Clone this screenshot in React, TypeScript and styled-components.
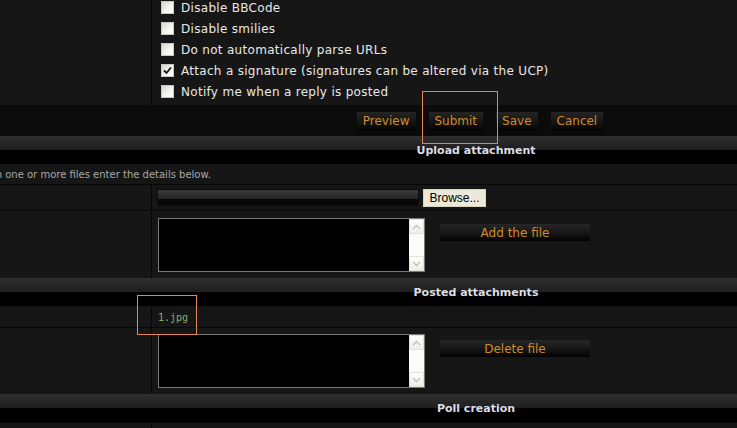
import React from "react";
import styled, { createGlobalStyle } from "styled-components";

const GlobalStyle = createGlobalStyle`
  html, body {
    margin: 0;
    padding: 0;
    background: #000;
    overflow: hidden;
  }
  body {
    font-family: "DejaVu Sans", Verdana, sans-serif;
  }
`;

const orange = "#cf8a2b";

const Viewport = styled.div`
  position: relative;
  width: 737px;
  height: 428px;
  overflow: hidden;
  background: #000;
`;

// the form table is wider than the window, it is centred at x=476
const Table = styled.div`
  width: 1312px;
  margin-left: -180px;
`;

const Split = styled.div<{ $h: number; $top?: boolean }>`
  display: grid;
  grid-template-columns: 332px 1fr;
  height: ${(p) => p.$h}px;
  box-sizing: border-box;
  background: #161616;
  border-top: ${(p) => (p.$top ? "1px solid #070707" : "none")};
  overflow: hidden;
`;

const LeftCell = styled.div`
  box-sizing: border-box;
  border-right: 1px solid #070707;
`;

const OptionList = styled.div`
  margin-top: -3px;
  padding-left: 9px;
`;

const OptionRow = styled.label`
  display: flex;
  align-items: center;
  gap: 7px;
  height: 21px;
  color: #e8e8e8;
  font-size: 12px;
  letter-spacing: 0.3px;
  white-space: nowrap;
`;

const Box = styled.span`
  display: inline-flex;
  align-items: center;
  justify-content: center;
  width: 13px;
  height: 13px;
  box-sizing: border-box;
  border: 1px solid #c8c8c0;
  background: linear-gradient(135deg, #d6d6ce 0%, #f4f4f0 55%, #ffffff 100%);
`;

const ButtonBar = styled.div`
  display: flex;
  justify-content: center;
  align-items: center;
  gap: 13px;
  height: 31px;
  padding: 2px 0 0 8px;
  box-sizing: border-box;
  background: #0b0b0b;
`;

const ActionButton = styled.button`
  height: 19px;
  padding: 0 6px;
  border: none;
  background: linear-gradient(to bottom, #242424 0%, #161616 50%, #030303 100%);
  color: ${orange};
  font-family: "DejaVu Sans", Verdana, sans-serif;
  font-size: 12px;
  line-height: 19px;
`;

const SectionHeader = styled.div`
  display: flex;
  align-items: center;
  justify-content: center;
  height: 28px;
  padding-top: 1px;
  box-sizing: border-box;
  background: linear-gradient(
    to bottom,
    #2f2f2f 0%,
    #1e1e1e 50%,
    #010101 50%,
    #000 100%
  );
  color: #dcdce4;
  font-size: 11px;
  font-weight: bold;
`;

const HelpRow = styled.div`
  height: 20px;
  line-height: 21px;
  padding-left: 80px;
  background: #161616;
  color: #a8a8a8;
  font-size: 10px;
  white-space: nowrap;
`;

const FileCell = styled.div`
  display: flex;
  align-items: center;
  gap: 4px;
  padding-left: 5px;
`;

const FileField = styled.div`
  width: 262px;
  height: 17px;
  box-sizing: border-box;
  border: 1px solid #0c0c0c;
  background: linear-gradient(to bottom, #3a3a3a 0%, #252525 60%, #080808 62%, #080808 100%);
`;

const BrowseButton = styled.button`
  width: 63px;
  height: 18px;
  padding: 0;
  border: 1px solid #d8d4c2;
  background: #ece9d8;
  color: #000;
  font-family: "Liberation Sans", Arial, sans-serif;
  font-size: 12px;
`;

const CommentCell = styled.div<{ $pt: number }>`
  display: flex;
  align-items: flex-start;
  gap: 15px;
  padding: ${(p) => p.$pt}px 0 0 6px;
`;

const TextBox = styled.div`
  display: flex;
  width: 267px;
  height: 54px;
  box-sizing: border-box;
  border: 1px solid #7a7a7a;
  background: #000;
`;

const Area = styled.textarea`
  flex: 1;
  border: none;
  resize: none;
  background: #000;
  outline: none;
`;

const Scroll = styled.div`
  display: flex;
  flex-direction: column;
  justify-content: space-between;
  width: 15px;
  background: #fbfbf7;
`;

const ScrollArrow = styled.div`
  display: flex;
  align-items: center;
  justify-content: center;
  height: 15px;
  box-sizing: border-box;
  border: 1px solid #e2e2d8;
  background: linear-gradient(to bottom, #fdfdfb, #efefe8);
`;

const WideButton = styled.button`
  width: 150px;
  height: 17px;
  margin-top: 6px;
  padding: 0;
  border: none;
  background: linear-gradient(to bottom, #262626 0%, #171717 50%, #020202 100%);
  color: ${orange};
  font-family: "DejaVu Sans", Verdana, sans-serif;
  font-size: 12px;
  line-height: 18px;
`;

const FileName = styled.div`
  display: flex;
  align-items: center;
  padding: 1px 0 0 6px;
  color: #8dab6e;
  font-family: "DejaVu Sans Mono", monospace;
  font-size: 10px;
`;

const Highlight = styled.div<{ $x: number; $y: number; $w: number; $h: number }>`
  position: absolute;
  left: ${(p) => p.$x}px;
  top: ${(p) => p.$y}px;
  width: ${(p) => p.$w}px;
  height: ${(p) => p.$h}px;
  box-sizing: border-box;
  border: 1px solid #e6855a;
  pointer-events: none;
`;

const Check = () => (
  <svg width="9" height="9" viewBox="0 0 9 9">
    <path d="M1 4.5 L3.5 7 L8 1.5" fill="none" stroke="#111" strokeWidth="1.8" />
  </svg>
);

const Chevron = ({ up }: { up?: boolean }) => (
  <svg width="9" height="6" viewBox="0 0 9 6">
    <path
      d={up ? "M1 5 L4.5 1.5 L8 5" : "M1 1 L4.5 4.5 L8 1"}
      fill="none"
      stroke="#c2c2b8"
      strokeWidth="1.4"
    />
  </svg>
);

const options = [
  { label: "Disable BBCode", checked: false },
  { label: "Disable smilies", checked: false },
  { label: "Do not automatically parse URLs", checked: false },
  { label: "Attach a signature (signatures can be altered via the UCP)", checked: true },
  { label: "Notify me when a reply is posted", checked: false },
];

const CommentBox = () => (
  <TextBox>
    <Area />
    <Scroll>
      <ScrollArrow>
        <Chevron up />
      </ScrollArrow>
      <ScrollArrow>
        <Chevron />
      </ScrollArrow>
    </Scroll>
  </TextBox>
);

export default function App() {
  return (
    <Viewport>
      <GlobalStyle />
      <Table>
        <Split $h={105}>
          <LeftCell />
          <OptionList>
            {options.map((o) => (
              <OptionRow key={o.label}>
                <Box>{o.checked && <Check />}</Box>
                {o.label}
              </OptionRow>
            ))}
          </OptionList>
        </Split>

        <ButtonBar>
          <ActionButton>Preview</ActionButton>
          <ActionButton>Submit</ActionButton>
          <ActionButton>Save</ActionButton>
          <ActionButton>Cancel</ActionButton>
        </ButtonBar>

        <SectionHeader>Upload attachment</SectionHeader>
        <HelpRow>If you wish to attach one or more files enter the details below.</HelpRow>

        <Split $h={26} $top>
          <LeftCell />
          <FileCell>
            <FileField />
            <BrowseButton>Browse...</BrowseButton>
          </FileCell>
        </Split>

        <Split $h={68} $top>
          <LeftCell />
          <CommentCell $pt={7}>
            <CommentBox />
            <WideButton>Add the file</WideButton>
          </CommentCell>
        </Split>

        <SectionHeader>Posted attachments</SectionHeader>

        <Split $h={21}>
          <LeftCell />
          <FileName>1.jpg</FileName>
        </Split>

        <Split $h={67} $top>
          <LeftCell />
          <CommentCell $pt={6}>
            <CommentBox />
            <WideButton>Delete file</WideButton>
          </CommentCell>
        </Split>

        <SectionHeader>Poll creation</SectionHeader>
        <Split $h={10} $top>
          <LeftCell />
          <div />
        </Split>
      </Table>

      <Highlight $x={422} $y={91} $w={76} $h={53} />
      <Highlight $x={137} $y={295} $w={60} $h={40} />
    </Viewport>
  );
}
